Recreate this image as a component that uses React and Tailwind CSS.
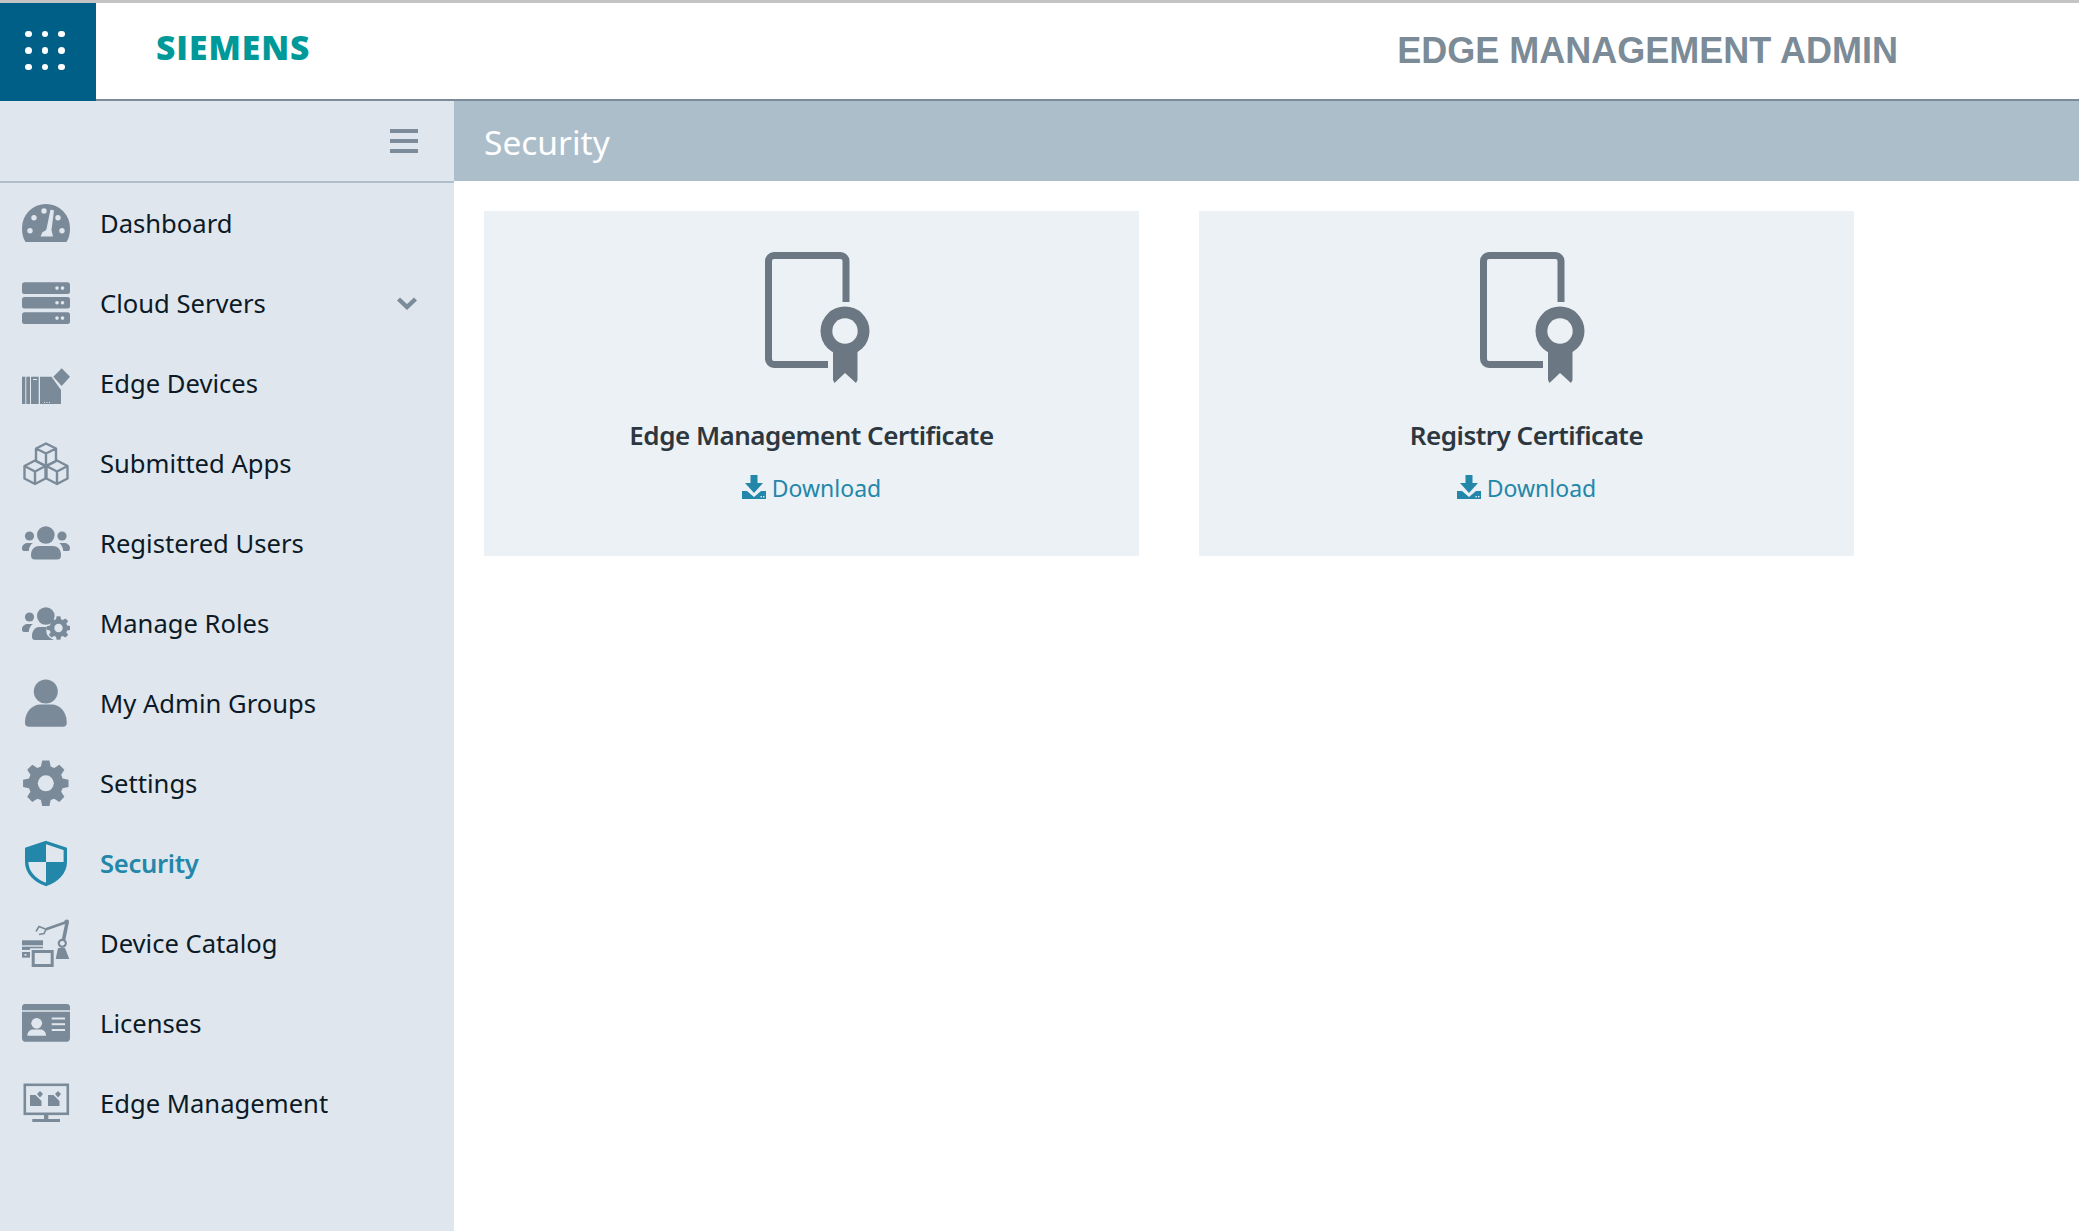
import React from "react";

const gearPath = (cx, cy, rOut, rIn, teeth) => {
  let d = "";
  const step = (Math.PI * 2) / teeth;
  for (let i = 0; i < teeth; i++) {
    const a = i * step - Math.PI / 2;
    const pts = [
      [rIn, a - step * 0.36],
      [rOut, a - step * 0.2],
      [rOut, a + step * 0.2],
      [rIn, a + step * 0.36],
    ];
    pts.forEach(([r, t], j) => {
      const x = (cx + r * Math.cos(t)).toFixed(2);
      const y = (cy + r * Math.sin(t)).toFixed(2);
      d += `${i === 0 && j === 0 ? "M" : "L"}${x} ${y} `;
    });
  }
  return d + "Z";
};

const Icon = ({ children, color = "#7a8a98" }) => (
  <svg viewBox="0 0 48 48" fill={color} className="w-12 h-12 shrink-0">
    {children}
  </svg>
);

const BG = "#dfe6ee";

const DashboardIcon = () => (
  <Icon>
    <path d="M3.5 43C1 39.5 0 34.5 0 29A24 24 0 0 1 48 29C48 34.5 47 39.5 44.5 43Z" />
    <g fill={BG}>
      <circle cx="12" cy="18.7" r="2.7" />
      <circle cx="22" cy="12" r="2.7" />
      <circle cx="36" cy="18.7" r="2.7" />
      <circle cx="8" cy="31.7" r="2.7" />
      <circle cx="40" cy="31.7" r="2.7" />
      <path d="M28.5 10.5L32 11.5L29.5 31L31 37.5H18.5L20.5 33Q24 32 24.5 30Z" />
    </g>
  </Icon>
);

const ServersIcon = () => (
  <Icon>
    {[3.3, 18, 33.3].map((y) => (
      <g key={y}>
        <rect x="0" y={y} width="48" height="11.6" rx="2.5" />
        <circle cx="35" cy={y + 5.8} r="1.8" fill={BG} />
        <circle cx="40.5" cy={y + 5.8} r="1.8" fill={BG} />
      </g>
    ))}
  </Icon>
);

const DevicesIcon = () => (
  <Icon>
    <rect x="0" y="17.7" width="3.3" height="27.3" />
    <rect x="4.3" y="17.7" width="3.7" height="27.3" />
    <rect x="9" y="17.7" width="7.7" height="27.3" />
    <rect x="11" y="20" width="4" height="1" fill={BG} />
    <path d="M18 17.7H29.5L39 31V45H18Z" />
    <path d="M39.7 9.3L48 17.7L39.7 27L31.3 17.7Z" />
    <g fill={BG}>
      <rect x="22" y="43" width="1" height="1" />
      <rect x="24.5" y="43" width="1" height="1" />
      <rect x="27" y="43" width="1" height="1" />
    </g>
  </Icon>
);

const AppsIcon = () => (
  <Icon>
    <g fill="none" stroke="#7a8a98" strokeWidth="2.4" strokeLinejoin="round">
      <path d="M24 4.5L34 9.5V22L24 27L14 22V9.5Z M14 9.5L24 14.5L34 9.5 M24 14.5V27" />
      <path d="M13 21.5L23.5 27V39.5L13 45L2.5 39.5V27Z M2.5 27L13 32.5L23.5 27 M13 32.5V45" />
      <path d="M35 21.5L45.5 27V39.5L35 45L24.5 39.5V27Z M24.5 27L35 32.5L45.5 27 M35 32.5V45" />
    </g>
  </Icon>
);

const UsersIcon = () => (
  <Icon>
    <circle cx="23.8" cy="16" r="8.8" />
    <circle cx="7.5" cy="17" r="4.6" />
    <circle cx="40" cy="17" r="4.6" />
    <path d="M9 36C9 30 13 27 17 27H31C35 27 39 30 39 36C39 39 38 40.5 35 40.5H13C10 40.5 9 39 9 36Z" />
    <path d="M0 29C0 26 3 24 6 24H11C9 25 7 28 6.7 32H2C0.5 32 0 31 0 29Z" />
    <path d="M48 29C48 26 45 24 42 24H37C39 25 41 28 41.3 32H46C47.5 32 48 31 48 29Z" />
  </Icon>
);

const RolesIcon = () => (
  <Icon>
    <circle cx="23.8" cy="17" r="8.8" />
    <circle cx="7.5" cy="18" r="4.6" />
    <path d="M0 30C0 27 3 25 6 25H11C9 26 7 29 6.7 33H2C0.5 33 0 32 0 30Z" />
    <path d="M10 37C10 32 13 28 17 28H25C24 31 24 35 26 37C28 39 30 40 32 41H13C10.5 41 10 39.5 10 37Z" />
    <path d={gearPath(36.5, 29, 11.8, 9, 8)} />
    <circle cx="36.5" cy="29" r="4.2" fill={BG} />
  </Icon>
);

const UserIcon = () => (
  <Icon>
    <circle cx="23.8" cy="12.5" r="12" />
    <path d="M3 43C3 32 11 25.5 18 25.5H30C37 25.5 44.7 32 44.7 43V44C44.7 46.5 43.5 47.7 41 47.7H7C4.5 47.7 3 46.5 3 44Z" />
  </Icon>
);

const SettingsIcon = () => (
  <Icon>
    <path d={gearPath(23.8, 24.3, 23, 17.5, 8)} />
    <circle cx="23.8" cy="24.3" r="8" fill={BG} />
  </Icon>
);

const ShieldIcon = () => (
  <Icon color="#2387aa">
    <path
      d="M24 3.5L43.3 10V23C43.3 34 34 42 24 45.5C14 42 4.7 34 4.7 23V10Z"
      fill="none"
      stroke="#2387aa"
      strokeWidth="3.4"
    />
    <path d="M24 3.5V23H4.7V10Z" />
    <path d="M24 23H43.3C43.3 34 34 42 24 45.5Z" />
  </Icon>
);

const CatalogIcon = () => (
  <Icon>
    <path d="M36 29L43 29L47.3 40H33.7Z" />
    <circle cx="40.3" cy="24.3" r="4.6" />
    <circle cx="40.3" cy="24.3" r="2.4" fill={BG} />
    <g fill="none" stroke="#7a8a98">
      <path d="M41.5 21L45 4" strokeWidth="3.6" />
      <path d="M44.7 3L24 10.3" strokeWidth="2.8" />
      <path d="M24 10.3L17 7.5L14 12.5M24 10.3L22 14.5L17 15.5" strokeWidth="1.6" />
    </g>
    <circle cx="44.7" cy="3" r="2.4" />
    <rect x="0" y="21.3" width="21" height="5" />
    <rect x="0" y="33" width="8" height="5.6" />
    <rect x="2.5" y="35" width="2" height="1.6" fill={BG} />
    <rect x="0" y="27.7" width="21" height="3.2" />
    <rect x="8" y="29.3" width="25.5" height="19" fill={BG} />
    <rect x="11.2" y="32.5" width="19" height="14" fill="none" stroke="#7a8a98" strokeWidth="3" />
  </Icon>
);

const LicenseIcon = () => (
  <Icon>
    <path d="M0 11.2V8C0 6 1.5 5 3 5H45C46.5 5 48 6 48 8V11.2Z" />
    <path d="M0 12.7H48V39.5C48 41.5 46.5 42.7 45 42.7H3C1.5 42.7 0 41.5 0 39.5Z" />
    <g fill={BG}>
      <circle cx="14.7" cy="24.3" r="5.4" />
      <path d="M5.3 36.7C5.3 33 8 30.5 11 30.5H18.5C21.5 30.5 24 33 24 36.7Z" />
      <rect x="29.7" y="18.5" width="13.3" height="2" />
      <rect x="29.7" y="24.2" width="13.3" height="2" />
      <rect x="29.7" y="30" width="13.3" height="2" />
    </g>
  </Icon>
);

const ManagementIcon = () => (
  <Icon>
    <rect x="2.8" y="5.8" width="43" height="29" fill="none" stroke="#7a8a98" strokeWidth="2.6" />
    <rect x="22" y="36" width="4.3" height="4" />
    <rect x="10.3" y="40" width="27.7" height="3" />
    <path d="M8 16H13.5L19.5 22V27H8Z" />
    <path d="M18 12L21 15L18 18.5L15 15Z" />
    <path d="M26 16H31.5L37.5 22V27H26Z" />
    <path d="M36 12L39 15L36 18.5L33 15Z" />
  </Icon>
);

const menuItems = [
  { label: "Dashboard", icon: <DashboardIcon /> },
  { label: "Cloud Servers", icon: <ServersIcon />, hasChildren: true },
  { label: "Edge Devices", icon: <DevicesIcon /> },
  { label: "Submitted Apps", icon: <AppsIcon /> },
  { label: "Registered Users", icon: <UsersIcon /> },
  { label: "Manage Roles", icon: <RolesIcon /> },
  { label: "My Admin Groups", icon: <UserIcon /> },
  { label: "Settings", icon: <SettingsIcon /> },
  { label: "Security", icon: <ShieldIcon />, active: true },
  { label: "Device Catalog", icon: <CatalogIcon /> },
  { label: "Licenses", icon: <LicenseIcon /> },
  { label: "Edge Management", icon: <ManagementIcon /> },
];

const certificates = ["Edge Management Certificate", "Registry Certificate"];

function CertificateCard({ title }) {
  return (
    <div className="w-[655px] h-[345px] bg-[#ecf1f5] flex flex-col items-center pt-[41px]">
      <svg viewBox="0 0 105 131" className="ml-[12px] w-[105px] h-[131px]" fill="#6b7883">
        <path
          d="M63 112.5H9A5.5 5.5 0 0 1 3.5 107V9A5.5 5.5 0 0 1 9 3.5H75.5A5.5 5.5 0 0 1 81 9V50"
          fill="none"
          stroke="#6b7883"
          strokeWidth="7"
        />
        <path d="M68 95H92.5V128L91 131L80 121L69.5 131L68 128Z" />
        <ellipse cx="80" cy="79" rx="24.5" ry="24.5" />
        <circle cx="80" cy="79" r="12.7" fill="#ecf1f5" />
      </svg>
      <h3 className="mt-[34px] text-[26px] leading-[36px] font-semibold tracking-[-0.5px] text-[#2d373f]">
        {title}
      </h3>
      <a className="mt-[19px] flex items-center gap-[6px] text-[23px] leading-[32px] text-[#2387aa]">
        <svg viewBox="0 0 24 24" className="w-6 h-6 mb-[3px]" fill="#2387aa">
          <path d="M8.5 0H15.5V8H21L12 18L3 8H8.5Z" />
          <path d="M0 16H5L12 22L19 16H24V24H0Z" />
          <rect x="18.5" y="21" width="1.4" height="1.4" fill="#ecf1f5" />
          <rect x="21" y="21" width="1.4" height="1.4" fill="#ecf1f5" />
        </svg>
        Download
      </a>
    </div>
  );
}

export default function App() {
  return (
    <div
      className="h-screen flex flex-col overflow-hidden bg-white border-t-[3px] border-[#c4c4c4]"
      style={{ fontFamily: '"Noto Sans", sans-serif' }}
    >
      <header className="h-[98px] flex shrink-0">
        <div className="w-24 bg-[#005f87] grid grid-cols-[repeat(3,6.6px)] gap-[10px] content-center justify-center pb-[3px] pr-[6px]">
          {Array.from({ length: 9 }).map((_, i) => (
            <span key={i} className="w-[6.6px] h-[6.6px] rounded-full bg-white" />
          ))}
        </div>
        <div className="flex-1 flex items-center border-b-2 border-[#7b8b99]">
          <div
            className="ml-[60px] mb-[6px] text-[33.5px] tracking-[1px] leading-none font-extrabold text-[#009999]"
            style={{ fontFamily: '"Open Sans", sans-serif' }}
          >
            SIEMENS
          </div>
          <div
            className="ml-auto mr-[181px] text-[36px] leading-none font-bold text-[#7b8b97]"
            style={{ fontFamily: '"Liberation Sans", Arial, sans-serif' }}
          >
            EDGE MANAGEMENT ADMIN
          </div>
        </div>
      </header>
      <div className="flex-1 flex min-h-0">
        <aside className="w-[454px] shrink-0 bg-[#dfe6ee]">
          <div className="h-[82px] flex items-center justify-end pr-[36px] border-b-2 border-[#aebfcb]">
            <div className="flex flex-col gap-[6px]">
              <span className="block w-[28px] h-1 bg-[#7b8b99]" />
              <span className="block w-[28px] h-1 bg-[#7b8b99]" />
              <span className="block w-[28px] h-1 bg-[#7b8b99]" />
            </div>
          </div>
          <nav>
            {menuItems.map((item) => (
              <div key={item.label} className="h-20 flex items-center pl-[22px] pr-[37px]">
                {item.icon}
                <span
                  className={`ml-[30px] pt-[1px] text-[25.6px] leading-none ${
                    item.active ? "text-[#2387aa] font-semibold tracking-[-0.3px]" : "text-[#0b1a26]"
                  }`}
                >
                  {item.label}
                </span>
                {item.hasChildren && (
                  <svg viewBox="0 0 20 13" className="ml-auto w-5 h-[13px]" fill="none" stroke="#7b8b99" strokeWidth="4.4">
                    <path d="M1.5 2L10 10L18.5 2" />
                  </svg>
                )}
              </div>
            ))}
          </nav>
        </aside>
        <main className="flex-1 min-w-0">
          <div className="h-20 bg-[#adbecb] flex items-center pl-[30px] pt-[2px] text-[33.5px] text-white">Security</div>
          <div className="flex gap-[60px] pl-[30px] pt-[30px]">
            {certificates.map((title) => (
              <CertificateCard key={title} title={title} />
            ))}
          </div>
        </main>
      </div>
    </div>
  );
}
